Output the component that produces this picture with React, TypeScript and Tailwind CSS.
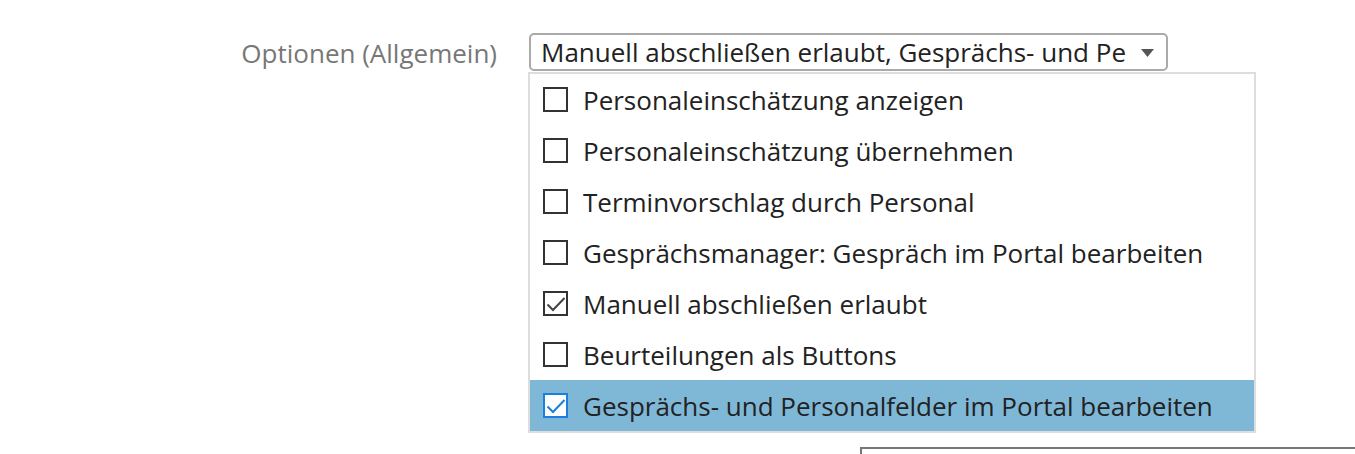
const options = [
  { label: 'Personaleinschätzung anzeigen', checked: false },
  { label: 'Personaleinschätzung übernehmen', checked: false },
  { label: 'Terminvorschlag durch Personal', checked: false },
  { label: 'Gesprächsmanager: Gespräch im Portal bearbeiten', checked: false },
  { label: 'Manuell abschließen erlaubt', checked: true },
  { label: 'Beurteilungen als Buttons', checked: false },
  { label: 'Gesprächs- und Personalfelder im Portal bearbeiten', checked: true, active: true },
];

function Box({ checked, active }: { checked: boolean; active?: boolean }) {
  return (
    <span
      className={`flex h-[25px] w-[25px] shrink-0 items-center justify-center border-2 bg-white ${
        active ? 'border-[#1a7fdf] text-[#1a7fdf]' : 'border-[#333] text-[#444]'
      }`}
    >
      {checked && (
        <svg width="21" height="21" viewBox="0 0 21 21" fill="none">
          <path d="M2.5 11.5L8 17L19.5 5" stroke="currentColor" strokeWidth="2" />
        </svg>
      )}
    </span>
  );
}

export default function App() {
  return (
    <div className="relative h-[454px] w-[1355px] overflow-hidden bg-white font-['Open_Sans',sans-serif] text-[26px] text-[#222]">
      <div className="flex items-start pt-[33px]">
        <div className="w-[497px] pt-[1px] text-right leading-[38px] text-[#777]">Optionen (Allgemein)</div>
        <div className="ml-[32px] flex flex-col">
          <div className="flex h-[38px] w-[639px] items-center justify-between rounded-[5px] border-2 border-[#aaa] pl-[10px] pr-[12px]">
            <span className="whitespace-nowrap leading-none">Manuell abschließen erlaubt, Gesprächs- und Pe</span>
            <svg width="13" height="8" viewBox="0 0 13 8" className="mt-[1px]">
              <path d="M0 0h13L6.5 8z" fill="#555" />
            </svg>
          </div>
          <ul className="-ml-[1px] mt-[1px] w-[728px] border-2 border-[#ddd] bg-white">
            {options.map((o) => (
              <li
                key={o.label}
                className={`flex h-[51px] items-center gap-[15px] pl-[13px] ${o.active ? 'bg-[#7fb8d7]' : ''}`}
              >
                <Box checked={o.checked} active={o.active} />
                <span className="mt-[2px] whitespace-nowrap">{o.label}</span>
              </li>
            ))}
          </ul>
        </div>
      </div>
      <div className="absolute left-[860px] top-[447px] h-[20px] w-[500px] border-l-2 border-t-2 border-[#777]" />
    </div>
  );
}
